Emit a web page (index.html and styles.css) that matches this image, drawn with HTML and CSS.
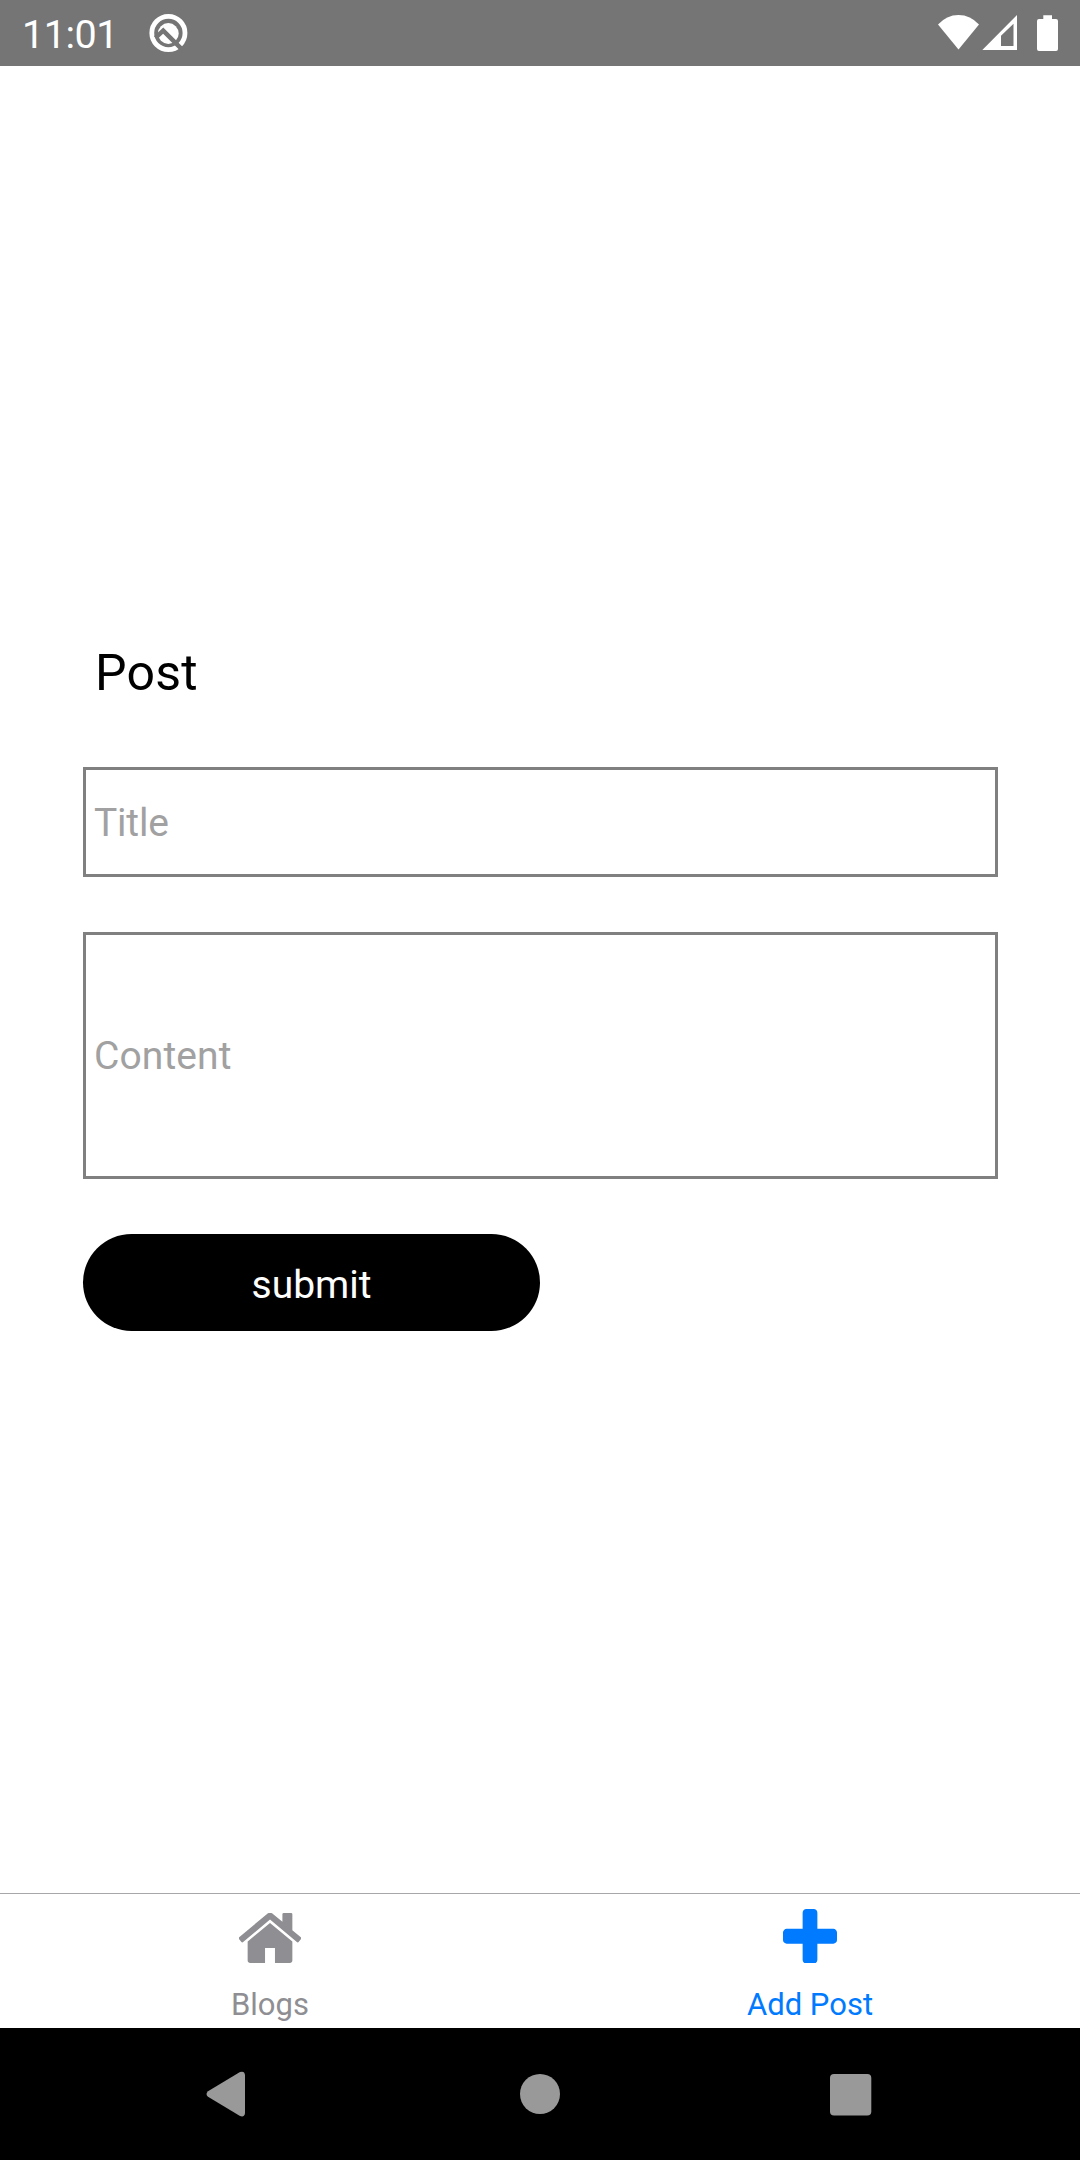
FILE: index.html
```html
<!DOCTYPE html>
<html lang="en">
<head>
<meta charset="utf-8">
<title>Add Post</title>
<link rel="stylesheet" href="styles.css">
</head>
<body>
<div class="screen">
  <header class="status-bar">
    <span class="clock">11:01</span>
    <svg class="app-icon" width="40" height="40" viewBox="148 13 40 40">
      <circle class="ring" cx="168.4" cy="33" r="16.6"/>
      <circle class="disc" cx="168.3" cy="33.5" r="10.4"/>
      <path class="slash" d="M155.5 37.8L163.2 30.6L184 51.4"/>
    </svg>
    <svg class="system-icons" width="124" height="40" viewBox="936 13 124 40">
      <path d="M958.5 49.5L938 24.6Q946.500 15 958.500 15T979 24.600Z"/>
      <path fill-rule="evenodd" d="M982.300 50L1017 15V50ZM1001 35.700V46H1013.500V23.700Z"/>
      <path d="M1043.300 15.200h8.700v3.800h4q2 0 2 2v28q0 2-2 2h-17q-2 0-2-2v-28q0-2 2-2h4.300z"/>
    </svg>
  </header>

  <main class="form">
    <h1 class="heading">Post</h1>
    <input class="field title-field" type="text" placeholder="Title">
    <input class="field content-field" type="text" placeholder="Content">
    <button class="submit" type="button">submit</button>
  </main>

  <nav class="tabs">
    <a class="tab">
      <svg class="tab-icon" width="62" height="50" viewBox="33 256 1598 1280" preserveAspectRatio="none">
        <path d="M1408 992v480q0 26-19 45t-45 19h-384v-384h-256v384h-384q-26 0-45-19t-19-45v-480q0-1 .5-3t.5-3l575-474 575 474q1 2 1 6zm223-69l-62 74q-8 9-21 11h-3q-13 0-21-7l-692-577-692 577q-12 8-24 7-13-2-21-11l-62-74q-8-10-7-23.500t11-21.500l719-599q32-26 76-26t76 26l244 204v-195q0-14 9-23t23-9h192q14 0 23 9t9 23v408l219 182q10 8 11 21.500t-7 23.500z"/>
      </svg>
      <span>Blogs</span>
    </a>
    <a class="tab active">
      <svg class="tab-icon" width="54" height="54.500" viewBox="0 0 1408 1408" preserveAspectRatio="none">
        <path d="M1408 608v192q0 40-28 68t-68 28H896v416q0 40-28 68t-68 28H608q-40 0-68-28t-28-68V896H96q-40 0-68-28T0 800V608q0-40 28-68t68-28h416V96q0-40 28-68t68-28h192q40 0 68 28t28 68v416h416q40 0 68 28t28 68z"/>
      </svg>
      <span>Add Post</span>
    </a>
  </nav>

  <footer class="system-nav">
    <svg class="back" width="40" height="46" viewBox="0 0 40 46"><path d="M2 20.200L34 1Q38.500-.500 39 4V42Q38.500 46.500 34 45L2 25.800Q-1 23 2 20.200Z"/></svg>
    <svg class="home" width="40" height="40" viewBox="0 0 40 40"><circle cx="20" cy="20" r="20"/></svg>
    <svg class="recent" width="42" height="42" viewBox="0 0 42 42"><rect width="41.300" height="41.500" rx="4"/></svg>
  </footer>
</div>
</body>
</html>
```

FILE: styles.css
```css
* {
  box-sizing: border-box;
}

body {
  margin: 0;
  background: #fff;
  font-family: Roboto, "Liberation Sans", sans-serif;
}

.screen {
  width: 1080px;
  height: 2160px;
  display: flex;
  flex-direction: column;
  overflow: hidden;
}

.status-bar {
  height: 66px;
  padding: 0 20px 0 22px;
  display: flex;
  align-items: center;
  background: #757575;
  color: #fff;
}

.clock {
  width: 126px;
  font-size: 39.5px;
  letter-spacing: -0.5px;
  line-height: 46px;
  padding-top: 4px;
}

.app-icon .ring {
  fill: none;
  stroke: #fff;
  stroke-width: 4.8;
}

.app-icon .disc {
  fill: #fff;
}

.app-icon .slash {
  fill: none;
  stroke: #757575;
  stroke-width: 4.4;
}

.system-icons {
  margin-left: auto;
  fill: #fff;
}

.form {
  flex: 1;
  padding: 578px 82px 0 83px;
  display: flex;
  flex-direction: column;
  align-items: flex-start;
}

.heading {
  margin: 0 0 64px;
  padding-left: 12px;
  font-size: 50px;
  font-weight: 400;
  letter-spacing: 0.2px;
  line-height: 59px;
  color: #000;
}

.field {
  width: 915px;
  margin: 0 0 55px;
  padding: 0 8px;
  border: 3px solid #808080;
  border-radius: 0;
  background: #fff;
  font-family: inherit;
  font-size: 39px;
  color: #000;
  outline: 0;
}

.field::placeholder {
  color: #a1a1a1;
  opacity: 1;
}

.title-field {
  height: 110px;
  padding-top: 2px;
  letter-spacing: -0.2px;
}

.content-field {
  height: 247px;
  letter-spacing: 0.1px;
}

.submit {
  width: 457px;
  height: 97px;
  padding: 4px 0 0;
  border: 0;
  border-radius: 49px;
  background: #000;
  color: #fff;
  font-family: inherit;
  font-size: 39px;
}

.tabs {
  height: 135px;
  display: flex;
  border-top: 1px solid #a7a7aa;
}

.tab {
  flex: 1;
  display: flex;
  flex-direction: column;
  align-items: center;
  justify-content: flex-end;
  padding-bottom: 5px;
  color: #8e8e93;
  font-size: 31px;
  line-height: 36px;
}

.tab-icon {
  fill: currentColor;
  margin-bottom: 24px;
}

.active {
  color: #007aff;
}

.system-nav {
  height: 132px;
  padding: 0 208px 0 206px;
  display: flex;
  align-items: center;
  justify-content: space-between;
  background: #000;
  fill: #999;
}

.home {
  margin-left: 4px;
}

.recent {
  margin-top: 2px;
}
```
